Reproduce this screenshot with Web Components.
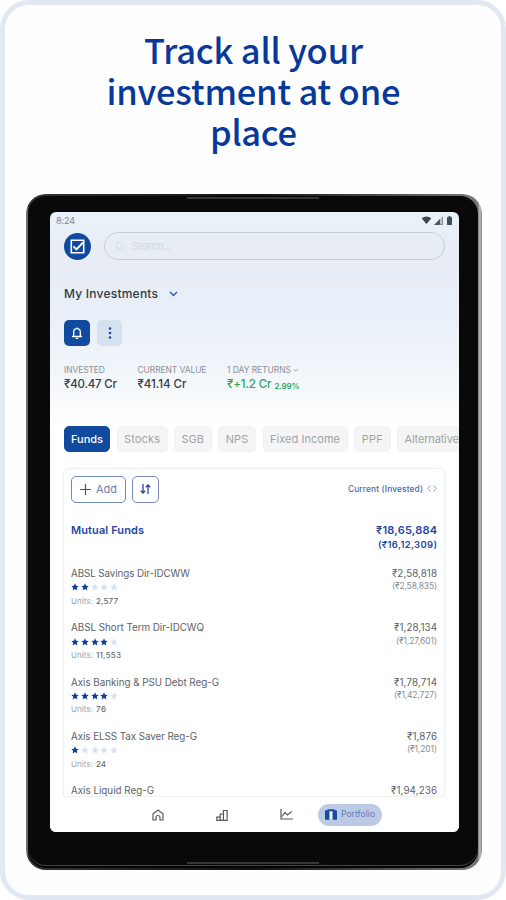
<!DOCTYPE html>
<html lang="en">
<head>
<meta charset="utf-8">
<title>Track all your investment at one place</title>
<style>
body{margin:0;background:#fff}
</style>
</head>
<body>
<promo-page></promo-page>
<script>
const define = (name, html, init) => customElements.define(name, class extends HTMLElement {
  connectedCallback() {
    if (this.shadowRoot) return;
    const root = this.attachShadow({ mode: 'open' });
    root.innerHTML = typeof html === 'function' ? html(this) : html;
    if (init) init(this, root);
  }
});

/* A single line of text, tracked so that it fills the width in "w". */
define('fit-text', `<style>
:host{display:block;white-space:nowrap;line-height:1;flex:none}
span{display:inline-block;white-space:nowrap}
</style><span><slot></slot></span>`, (el, root) => {
  const w = +el.getAttribute('w');
  if (!w) return;
  const span = root.querySelector('span');
  const n = el.textContent.length;
  const gap = (w - span.getBoundingClientRect().width) / (n - 1);
  span.style.letterSpacing = gap + 'px';
  span.style.marginRight = -gap + 'px';
});

define('star-rating', el => {
  const n = +el.getAttribute('value');
  const star = i => `<svg width="8" height="8" viewBox="0 0 24 24"><path fill="${i < n ? '#0f3f9c' : '#d3e2fb'}" d="M12 1l3.3 7.3 7.9.8-5.9 5.3 1.700 7.900L12 18.300 5 22.300l1.700-7.900L.8 9.100l7.900-.8z"/></svg>`;
  return `<style>:host{display:flex;gap:1.800px;height:8px}svg{display:block}</style>` + [0,1,2,3,4].map(star).join('');
});

define('status-bar', `<style>
:host{display:flex;justify-content:space-between;align-items:center;height:16px;padding:0 5px 0 6px;box-sizing:border-box;color:#7f858c;font-size:9px}
div{display:flex;gap:2px;align-items:center}svg{display:block}
</style><fit-text w="19">8:24</fit-text>
<div><svg width="11" height="8" viewBox="0 0 11 9"><path fill="#3c444e" d="M0 2.500Q5.500-1.500 11 2.500L5.500 9z"/></svg>
<svg width="9" height="9" viewBox="0 0 9 9"><path fill="#b9c1ca" d="M9 0v9H0z"/><path fill="#4d555f" d="M6 3v6H0z"/><path fill="none" stroke="#6b737c" stroke-width=".7" d="M8.600 1v7.600H5"/></svg>
<svg width="9" height="9" viewBox="0 0 9 9"><path fill="#444c55" d="M2 1.200h1.500V0h2v1.200H7V9H2z"/></svg></div>`);

define('search-header', `<style>
:host{display:flex;gap:13px;padding:4px 14px 0;align-items:center}
.logo{width:27px;height:27px;border-radius:50%;background:#104a9f;display:grid;place-items:center}
.search{flex:1;height:28px;box-sizing:border-box;border:1px solid #c8ced6;border-radius:14px;display:flex;align-items:center;gap:6px;padding-left:10px;color:#d3dae3;font-size:11px}
svg{display:block}
</style><div class="logo"><svg width="15" height="15" viewBox="0 0 15 15" fill="none" stroke="#fff"><path stroke-width="1.600" d="M1.300 1.300h12.400v12.400H1.300z"/><path stroke-width="1.900" d="M3.500 7.300l3 3L13 3.500"/></svg></div>
<div class="search"><svg width="10" height="10" viewBox="0 0 10 10" fill="none" stroke="#d5dce5"><circle cx="4.300" cy="4.300" r="3.300"/><path d="M6.800 6.800L9.500 9.500"/></svg><fit-text w="40">Search...</fit-text></div>`);

define('account-tools', `<style>
:host{display:block;padding:27px 14px 0}
.title{display:flex;align-items:center;gap:11px;height:13px;color:#333a44;font-size:12px;font-weight:500}
.buttons{display:flex;gap:7px;padding-top:20px}
.b{width:26px;height:26px;border-radius:5px;background:#114a9f;display:grid;place-items:center}
.b+.b{width:25px;background:#d6e1f0}svg{display:block}
</style><div class="title"><fit-text w="94">My Investments</fit-text><svg width="9" height="6" viewBox="0 0 9 6" fill="none" stroke="#2c59a6" stroke-width="1.400"><path d="M1 1l3.500 3.500L8 1"/></svg></div>
<div class="buttons"><div class="b"><svg width="12" height="13" viewBox="0 0 12 13" fill="none" stroke="#fff" stroke-width="1.300"><path d="M1 9.500h10M2.700 9.500V5a3.300 3.300 0 0 1 6.600 0v4.500M4.800 11.300h2.400M6 .5v1"/></svg></div>
<div class="b"><svg width="4" height="12" viewBox="0 0 4 12" fill="#2343a5"><circle cx="2" cy="1.500" r="1.300"/><circle cx="2" cy="6" r="1.300"/><circle cx="2" cy="10.500" r="1.300"/></svg></div></div>`);

define('stat-item', el => `<style>
:host{display:block;color:var(--value,#363b42)}
.l{display:flex;align-items:center;gap:2px;height:8px;color:#8b9097;font-size:8.500px}
.v{display:flex;align-items:center;gap:3px;height:12px;margin-top:5px;font-size:11.500px;font-weight:500}
</style><div class="l"><fit-text w="${el.getAttribute('lw')}">${el.getAttribute('label')}</fit-text><slot name="mark"></slot></div><div class="v"><fit-text w="${el.getAttribute('vw')}">${el.getAttribute('value')}</fit-text><slot></slot></div>`);

define('stat-row', `<style>
:host{display:flex;gap:20.500px;padding:20px 14px 0}
.small{font-size:8px;font-weight:600;padding-top:1px}
.up{--value:#27a65a}
</style><stat-item label="INVESTED" lw="41" value="₹40.47 Cr" vw="53"></stat-item>
<stat-item label="CURRENT VALUE" lw="69" value="₹41.14 Cr" vw="49"></stat-item>
<stat-item class="up" label="1 DAY RETURNS" lw="64" value="₹+1.2 Cr" vw="44.500"><svg slot="mark" width="6" height="5" viewBox="0 0 6 5" fill="none" stroke="#8b9097" stroke-width=".9"><path d="M1 1.200l2 2 2-2"/></svg><fit-text class="small" w="25">2.99%</fit-text></stat-item>`);

define('tab-chip', el => `<style>
:host{display:flex;align-items:center;justify-content:center;flex:none;box-sizing:border-box;height:26px;border-radius:5px;background:#f5f5f6;border:1px solid #f0f1f2;color:#a0a2a5;font-size:11px;width:${el.getAttribute('box')}px}
:host([active]){background:#114a9f;border-color:#114a9f;color:#fff;font-weight:500}
</style><fit-text w="${el.getAttribute('text')}">${el.textContent}</fit-text>`);

define('tab-strip', `<style>:host{display:flex;gap:6.500px;padding:35px 0 0 14px;overflow:hidden}</style>
<tab-chip active box="46" text="32">Funds</tab-chip><tab-chip box="51" text="36">Stocks</tab-chip><tab-chip box="37.500" text="22.500">SGB</tab-chip><tab-chip box="38" text="22.500">NPS</tab-chip><tab-chip box="85" text="70">Fixed Income</tab-chip><tab-chip box="36.500" text="21">PPF</tab-chip><tab-chip box="75" text="60">Alternatives</tab-chip>`);

define('fund-row', el => {
  const a = n => el.getAttribute(n);
  const detail = a('units') ? `<star-rating value="${a('stars')}"></star-rating>
<div class="u"><fit-text w="22">Units:</fit-text><b><fit-text w="${a('uw')}">${a('units')}</fit-text></b></div>` : '';
  const invested = a('invested') ? `<fit-text class="s" w="${a('iw')}">(${a('invested')})</fit-text>` : '';
  return `<style>
:host{display:flex;justify-content:space-between;height:54.300px}
.n{font-size:9.800px;color:#5d6168}
star-rating{margin-top:4.500px}
.u{display:flex;gap:3px;font-size:8px;margin-top:5.500px;color:#a1a4a9}.u b{font-weight:500;color:#666a70}
.r{display:flex;flex-direction:column;align-items:flex-end}.s{font-size:8.500px;color:#888c91;margin-top:3.500px}
</style><div><fit-text class="n" w="${a('nw')}">${a('name')}</fit-text>${detail}</div>
<div class="r"><fit-text class="n" w="${a('cw')}">${a('current')}</fit-text>${invested}</div>`;
});

define('fund-card', `<style>
:host{display:block;box-sizing:border-box;margin:16px 14px 0 13px;flex:1;min-height:0;overflow:hidden;border:1px solid #edf1f4;border-bottom-color:#eef0f2;border-radius:6px 6px 0 0;padding:6.500px 7px 0;background:#fff;box-shadow:0 0 3px #eef2f6}
.bar,.head,.left,.right{display:flex;align-items:center}.bar,.head{justify-content:space-between}
.left{gap:6px}.right{gap:4px;font-size:8.300px;font-weight:500;color:#4865af}
.btn{height:27px;box-sizing:border-box;border:1px solid #7189c0;border-radius:5px;display:flex;align-items:center;justify-content:center;gap:5px;width:55px;font-size:11px;color:#6c80b5}
.sq{width:27px}svg{display:block}
.head{align-items:flex-start;padding-top:22px;height:45px;box-sizing:border-box;font-weight:600;color:#24489f}
.m{font-size:11px}.t{display:flex;flex-direction:column;align-items:flex-end;gap:4px;font-size:11px}.t .x{font-size:9.500px}
.rows{padding-top:21.500px}
</style><div class="bar"><div class="left"><div class="btn"><svg width="11" height="11" viewBox="0 0 11 11" stroke="#36549f" stroke-width="1.200"><path d="M5.500 0v11M0 5.500h11"/></svg><fit-text w="21">Add</fit-text></div>
<div class="btn sq"><svg width="11" height="10" viewBox="0 0 11 10" fill="none" stroke="#28489c" stroke-width="1.300"><path d="M3 0v9M.8 6.700L3 9l2.200-2.300M8 10V1M5.800 3.300L8 1l2.200 2.300"/></svg></div></div>
<div class="right"><fit-text w="75">Current (Invested)</fit-text><svg width="10" height="7" viewBox="0 0 10 7" fill="none" stroke="#9ba4b0"><path d="M3.500.5l-3 3 3 3M6.500.5l3 3-3 3"/></svg></div></div>
<div class="head"><fit-text class="m" w="73">Mutual Funds</fit-text><div class="t"><fit-text w="61">₹18,65,884</fit-text><fit-text class="x" w="59">(₹16,12,309)</fit-text></div></div>
<div class="rows">
<fund-row name="ABSL Savings Dir-IDCWW" nw="119" stars="2" units="2,577" uw="22" current="₹2,58,818" cw="45" invested="₹2,58,835" iw="45"></fund-row>
<fund-row name="ABSL Short Term Dir-IDCWQ" nw="133" stars="4" units="11,553" uw="25" current="₹1,28,134" cw="43" invested="₹1,27,601" iw="41"></fund-row>
<fund-row name="Axis Banking &amp;amp; PSU Debt Reg-G" nw="148" stars="4" units="76" uw="10" current="₹1,78,714" cw="43" invested="₹1,42,727" iw="43"></fund-row>
<fund-row name="Axis ELSS Tax Saver Reg-G" nw="126" stars="1" units="24" uw="10" current="₹1,876" cw="30" invested="₹1,201" iw="30"></fund-row>
<fund-row name="Axis Liquid Reg-G" nw="83" current="₹1,94,236" cw="46"></fund-row>
</div>`);

define('bottom-nav', `<style>
:host{display:grid;grid-template-columns:64px 64px 64px 64px;align-items:center;justify-items:center;height:35px;padding-left:76px;flex:none;background:#fff}
svg{display:block}.pill{width:64px;height:22px;border-radius:11px;background:#bccae6;display:flex;align-items:center;justify-content:center;gap:4px;font-size:8.500px;color:#627cb6}
</style><svg width="12" height="12" viewBox="0 0 12 12" fill="none" stroke="#555a60" stroke-width="1.200"><path d="M1 11V4.800L6 1l5 3.800V11H8V8.500a2 2 0 0 0-4 0V11z"/></svg>
<svg width="12" height="12" viewBox="0 0 12 12" fill="none" stroke="#555a60" stroke-width="1.200"><path d="M.8 11.300V8.200h3.400M4.200 11.300V5h3.200M7.400 11.300V1.500h3.700v9.800M.2 11.300h11.500"/></svg>
<svg width="13" height="11" viewBox="0 0 13 11" fill="none" stroke="#555a60" stroke-width="1.200"><path d="M1 0v10h12M2 7.500l3-4 2.500 2.500L11.800 2.500"/></svg>
<div class="pill"><svg width="12" height="11" viewBox="0 0 12 11"><path fill="#174c9f" d="M0 1.800L3.500.2h5l3.500 1.600V10.800H0z"/><path fill="#e8eef8" d="M4.400 2.300h3.200v8.500H4.400z"/></svg><fit-text w="34">Portfolio</fit-text></div>`);

define('tablet-device', `<style>
:host{display:block;box-sizing:border-box;width:456px;height:676px;margin:0 0 0 21px;padding:2px 4px 2px 2px;border-radius:20px;background:linear-gradient(90deg,#4c4c4c,#9a9a9a 1px,#333 2px,#111 50%,#777 452px,#c6c6c6 454px,#777)}
.body{box-sizing:border-box;height:672px;border-radius:18px;background:#090909;padding:0 19px 0 22px;display:flex;flex-direction:column;align-items:flex-start;box-shadow:inset 0 -2px 0 #050505,inset 0 -3px 0 #444}
.slot{width:132px;height:2px;background:#353535;margin:1px 0 0 137px;flex:none}
.slot.low{margin-top:30px}
.screen{margin-top:13px;width:409px;height:620px;flex:none;border-radius:6px;overflow:hidden;background:linear-gradient(#eaf2f9 0,#e7ecf5 40px,#e9eff8 100px,#f0f5fa 155px,#fff 218px);display:flex;flex-direction:column;font-family:Inter,"Liberation Sans",sans-serif}
</style><div class="body"><div class="slot"></div><div class="screen"><slot></slot></div><div class="slot low"></div></div>`);

define('promo-page', `<style>
:host{display:block;box-sizing:border-box;width:506px;height:900px;border:5px solid #e2e8f2;border-radius:29px;background:#fefefe;overflow:hidden;padding-top:24px}
h1{margin:0 0 38px;height:127px;font:500 34.500px/41px "Noto Sans CJK SC",sans-serif;color:#07389a;display:flex;flex-direction:column;align-items:center;padding-left:1px}
h1 fit-text{line-height:41px}
</style><h1><fit-text w="219">Track all your</fit-text><fit-text w="294">investment at one</fit-text><fit-text w="87">place</fit-text></h1>
<tablet-device><status-bar></status-bar><search-header></search-header><account-tools></account-tools><stat-row></stat-row><tab-strip></tab-strip><fund-card></fund-card><bottom-nav></bottom-nav></tablet-device>`);
</script>
</body>
</html>
